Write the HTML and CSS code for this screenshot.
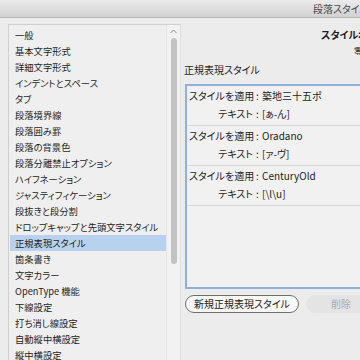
FILE: index.html
```html
<!DOCTYPE html>
<html lang="ja">
<head>
<meta charset="utf-8">
<link rel="stylesheet" href="styles.css">
</head>
<body>
<div class="window">
  <div class="titlebar"><span class="title">段落スタイルの設定</span></div>
  <div class="content">
    <div class="sidebar">
      <ul class="list">
        <li>一般</li>
        <li>基本文字形式</li>
        <li>詳細文字形式</li>
        <li>インデントとスペース</li>
        <li>タブ</li>
        <li>段落境界線</li>
        <li>段落囲み罫</li>
        <li>段落の背景色</li>
        <li>段落分離禁止オプション</li>
        <li>ハイフネーション</li>
        <li>ジャスティフィケーション</li>
        <li>段抜きと段分割</li>
        <li>ドロップキャップと先頭文字スタイル</li>
        <li class="selected">正規表現スタイル</li>
        <li>箇条書き</li>
        <li>文字カラー</li>
        <li>OpenType 機能</li>
        <li>下線設定</li>
        <li>打ち消し線設定</li>
        <li>自動縦中横設定</li>
        <li>縦中横設定</li>
      </ul>
      <div class="scrollbar">
        <svg class="arrow" width="7" height="5" viewBox="0 0 7 5"><polyline points="0.5,4 3.5,1 6.5,4" fill="none" stroke="#8a8a8a" stroke-width="1"/></svg>
        <div class="thumb"></div>
      </div>
    </div>
    <div class="main">
      <div class="stylename">スタイル名：</div>
      <div class="sub">零</div>
      <div class="section-label">正規表現スタイル</div>
      <div class="rules">
        <div class="rule">
          <div class="line"><span class="key">スタイルを適用</span><span class="sep">:</span><span class="val">築地三十五ポ</span></div>
          <div class="line"><span class="key">テキスト</span><span class="sep">:</span><span class="val">[ぁ-ん]</span></div>
        </div>
        <div class="rule">
          <div class="line"><span class="key">スタイルを適用</span><span class="sep">:</span><span class="val">Oradano</span></div>
          <div class="line"><span class="key">テキスト</span><span class="sep">:</span><span class="val">[ァ-ヴ]</span></div>
        </div>
        <div class="rule">
          <div class="line"><span class="key">スタイルを適用</span><span class="sep">:</span><span class="val">CenturyOld</span></div>
          <div class="line"><span class="key">テキスト</span><span class="sep">:</span><span class="val">[\l\u]</span></div>
        </div>
      </div>
      <div class="buttons">
        <button class="btn">新規正規表現スタイル</button>
        <button class="btn disabled">削除</button>
      </div>
    </div>
  </div>
</div>
</body>
</html>
```
FILE: styles.css
```css
html, body {
  margin: 0;
  padding: 0;
}
body {
  width: 360px;
  height: 360px;
  overflow: hidden;
  background: #ececec;
  font-family: "Noto Sans CJK JP", "Noto Sans", sans-serif;
  font-size: 10px;
  color: #1e1e1e;
  font-feature-settings: "palt";
}
.window {
  width: 460px;
}
.titlebar {
  height: 17px;
  background: linear-gradient(#ebebeb, #d2d2d2);
  border-bottom: 1px solid #b4b4b4;
  padding-left: 313px;
  white-space: nowrap;
  overflow: hidden;
}
.title {
  line-height: 17px;
  color: #4a4a4a;
  font-size: 10px;
}
.content {
  display: flex;
  align-items: flex-start;
}
.sidebar {
  margin-top: 6px;
  margin-left: 8px;
  width: 171px;
  height: 400px;
  border-left: 1px solid #cfcfcf;
  border-top: 1px solid #cfcfcf;
  border-right: 1px solid #dedede;
  background: #efefef;
  display: flex;
}
.list {
  list-style: none;
  margin: 2px 0 0 1px;
  padding: 0;
  width: 156px;
  font-size: 9.3px;
}
.list li {
  height: 16px;
  line-height: 16px;
  padding-left: 5px;
  white-space: nowrap;
}
.list li.selected {
  background: #b7d1ef;
}
.scrollbar {
  flex: 1;
  display: flex;
  flex-direction: column;
  align-items: center;
  padding-top: 4px;
  background: #f2f2f2;
  border-left: 1px solid #e4e4e4;
}
.arrow {
  display: block;
}
.thumb {
  margin-top: 4px;
  width: 6px;
  height: 226px;
  border-radius: 3px;
  background: #c3c3c3;
}
.main {
  margin-left: 3px;
  padding-top: 9px;
  width: 260px;
}
.stylename {
  line-height: 16px;
  padding-left: 137px;
  font-weight: bold;
  white-space: nowrap;
}
.sub {
  line-height: 16px;
  padding-left: 170px;
  font-size: 8px;
}
.section-label {
  margin-top: 3px;
  line-height: 16px;
}
.rules {
  margin-top: 6px;
  margin-left: 1px;
  height: 201px;
  border: 2px solid #8eb0dd;
  background: #f1f1f1;
}
.rule {
  padding: 1px 0 2px;
  border-bottom: 1px solid #d6d6d6;
}
.line {
  display: flex;
  line-height: 18px;
  white-space: nowrap;
}
.key {
  width: 64px;
  margin-left: 2px;
  text-align: right;
}
.sep {
  width: 9px;
  text-align: center;
}
.buttons {
  display: flex;
  gap: 7px;
  margin-top: 6px;
  margin-left: 1px;
}
.btn {
  font-family: inherit;
  font-size: 10px;
  font-feature-settings: "palt";
  width: 114px;
  height: 18px;
  padding: 0;
  line-height: 16px;
  border: 1px solid #6e6e6e;
  border-radius: 9px;
  background: #f8f8f8;
  color: #222;
}
.btn.disabled {
  width: 70px;
  border-color: #e4e4e4;
  background: #e4e4e4;
  color: #a9a9a9;
}
```
